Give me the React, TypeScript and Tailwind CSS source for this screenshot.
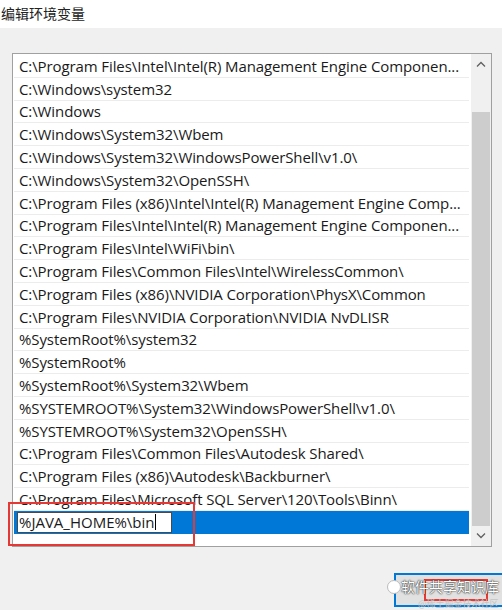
const PATHS = [
  "C:\\Program Files\\Intel\\Intel(R) Management Engine Componen...",
  "C:\\Windows\\system32",
  "C:\\Windows",
  "C:\\Windows\\System32\\Wbem",
  "C:\\Windows\\System32\\WindowsPowerShell\\v1.0\\",
  "C:\\Windows\\System32\\OpenSSH\\",
  "C:\\Program Files (x86)\\Intel\\Intel(R) Management Engine Comp...",
  "C:\\Program Files\\Intel\\Intel(R) Management Engine Componen...",
  "C:\\Program Files\\Intel\\WiFi\\bin\\",
  "C:\\Program Files\\Common Files\\Intel\\WirelessCommon\\",
  "C:\\Program Files (x86)\\NVIDIA Corporation\\PhysX\\Common",
  "C:\\Program Files\\NVIDIA Corporation\\NVIDIA NvDLISR",
  "%SystemRoot%\\system32",
  "%SystemRoot%",
  "%SystemRoot%\\System32\\Wbem",
  "%SYSTEMROOT%\\System32\\WindowsPowerShell\\v1.0\\",
  "%SYSTEMROOT%\\System32\\OpenSSH\\",
  "C:\\Program Files\\Common Files\\Autodesk Shared\\",
  "C:\\Program Files (x86)\\Autodesk\\Backburner\\",
  "C:\\Program Files\\Microsoft SQL Server\\120\\Tools\\Binn\\",
];

const FONT = "font-['Segoe_UI','Open_Sans','Noto_Sans_CJK_SC',sans-serif]";

function Row({ text }: { text: string }) {
  return (
    <div className="h-[22.8px] border-b border-[#ececec] pl-[5px] pr-[2px] flex items-center min-w-0">
      <span className="whitespace-nowrap text-[15px] text-[#1a1a1a] leading-[20px] tracking-[-0.1px]">{text}</span>
    </div>
  );
}

// Windows-style scrollbar on the right of the list box
function ScrollBar() {
  return (
    <div className="w-[20px] shrink-0 flex flex-col bg-[#f0f0f0]">
      <div className="h-[20px] flex items-center justify-center">
        <svg width="10" height="6" viewBox="0 0 10 6">
          <path d="M1 5.5 L5 1.5 L9 5.5" fill="none" stroke="#606060" strokeWidth="1.3" />
        </svg>
      </div>
      <div className="h-[38px]" />
      <div className="flex-1 mx-[1px] bg-[#cdcdcd]" />
      <div className="h-[20px] flex items-center justify-center">
        <svg width="10" height="6" viewBox="0 0 10 6">
          <path d="M1 0.5 L5 4.5 L9 0.5" fill="none" stroke="#606060" strokeWidth="1.3" />
        </svg>
      </div>
    </div>
  );
}

export default function App() {
  return (
    <div className={`relative w-[502px] h-[610px] bg-[#f0f0f0] flex flex-col overflow-hidden ${FONT}`}>
      {/* Title strip */}
      <div className="h-[28px] bg-white pl-[1px] pt-[1px]">
        <span className="text-[14px] text-[#222] font-['Noto_Sans_CJK_SC',sans-serif]">编辑环境变量</span>
      </div>

      {/* List box */}
      <div className="mt-[25px] ml-[12px] w-[480px] h-[494px] border border-[#a0a0a0] bg-white flex relative">
        <div className="flex-1 min-w-0 flex flex-col pt-[1px] pl-[1px] pr-[2px]">
          {PATHS.map((p, i) => (
            <Row key={i} text={p} />
          ))}
          {/* selected row being edited */}
          <div className="h-[22.8px] bg-[#0078d7] flex items-center">
            <div className="ml-[3px] w-[155px] h-[21px] bg-white border border-[#4a4a4a] flex items-center pl-[1px]">
              <span className="text-[15px] text-[#1a1a1a] leading-[20px]">%JAVA_HOME%\bin</span>
              <span className="w-px h-[16px] bg-black" />
            </div>
          </div>
        </div>
        <ScrollBar />

        {/* red highlight around the new entry */}
        <div className="absolute left-[-5px] top-[448px] w-[187px] h-[44px] border-2 border-[#e53935]" />
      </div>

      {/* Bottom button with watermark overlay */}
      <div className="mt-[26px] flex justify-end">
        <div className="relative w-[112px] h-[34px] mr-[-4px] border-2 border-[#0078d7] bg-[#e1e1e1] flex items-center justify-center">
          <div className="absolute left-[28px] top-[4px] w-[64px] h-[22px] border-2 border-[#e53935]" />
          <span className="relative -mt-[8px] text-[14px] leading-[16px] text-white font-['Noto_Sans_CJK_SC',sans-serif] [text-shadow:0_0_2px_#333,0_0_1px_#000]">
            软件共享知识库
          </span>
          <span className="absolute left-[22px] bottom-[-4px] text-[9px] leading-[10px] text-[#c4c4c4] font-['Noto_Sans_CJK_SC',sans-serif]">
            @稀土掘金技术社区
          </span>
        </div>
      </div>
      <div className="absolute left-[387px] top-[580px] w-[14px] h-[14px] rounded-full bg-white border border-[#bbb]" />
    </div>
  );
}
